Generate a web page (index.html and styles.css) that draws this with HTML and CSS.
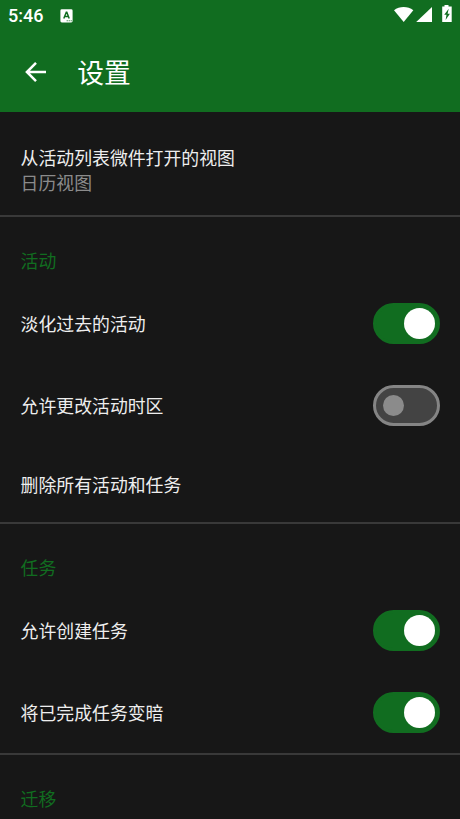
FILE: index.html
```html
<!DOCTYPE html>
<html lang="zh-CN">
<head>
<meta charset="utf-8">
<title>设置</title>
<link rel="stylesheet" href="styles.css">
</head>
<body>
<header class="header">
  <div class="status">
    <span class="clock">5:46</span>
    <svg class="notice" width="13" height="14" viewBox="0 0 13 14"><rect x="0.4" y="0.3" width="12.2" height="13.2" rx="1.4" fill="#fff"/><path d="M3.8 9.5 6.3 3.3h.5l2.4 6.2M4.6 7.5h3.8" fill="none" stroke="#116d20" stroke-width="1.5"/><path d="M6.7 11.2h1v1h-1zM8.7 11.2h1v1h-1zM10.7 11.2h1v1h-1z" fill="#116d20"/></svg>
    <svg class="signals" width="60" height="20" viewBox="0 0 60 20"><path d="M0 5.2C5.5.8 13.8.8 19.3 5.2L9.7 17Z" fill="#fff"/><path d="M22.2 17 38 1.9V17Z" fill="#fff"/><path d="M50.5 0h4v1.6h3.2V17H48.2V1.6h2.3Z" fill="#fff"/><path d="M54.7 3.8 50.2 9.7h2.3l-.9 5.2L55.9 8.7h-2.3Z" fill="#116d20"/></svg>
  </div>
  <div class="toolbar">
    <svg class="back" width="22" height="22" viewBox="0 0 22 22"><path d="M21 11H2M11 1.8 1.9 11 11 20.2" fill="none" stroke="#fff" stroke-width="2.5"/></svg>
    <h1 class="title">设置</h1>
  </div>
</header>
<main>
  <section class="group">
    <div class="row choice"><div class="label">从活动列表微件打开的视图</div><div class="value">日历视图</div></div>
  </section>
  <section class="group">
    <h2 class="heading">活动</h2>
    <div class="row"><span class="label">淡化过去的活动</span><span class="switch on"></span></div>
    <div class="row"><span class="label">允许更改活动时区</span><span class="switch"></span></div>
    <div class="row action"><span class="label">删除所有活动和任务</span></div>
  </section>
  <section class="group">
    <h2 class="heading">任务</h2>
    <div class="row"><span class="label">允许创建任务</span><span class="switch on"></span></div>
    <div class="row last"><span class="label">将已完成任务变暗</span><span class="switch on"></span></div>
  </section>
  <section class="group">
    <h2 class="heading">迁移</h2>
  </section>
</main>
</body>
</html>
```
FILE: styles.css
```css
* { box-sizing: border-box; }
html, body { height: 819px; overflow: hidden; }
body {
  margin: 0;
  background: #171717;
  color: #eee;
  font: 17.88px/25px Roboto, "Noto Sans CJK SC", sans-serif;
}
.header { height: 112.4px; background: #116d20; color: #fff; }
.status { display: flex; align-items: center; height: 32px; padding: 0 8px; }
.clock { width: 52px; font-size: 18px; font-weight: 500; line-height: 32px; }
.notice { display: block; }
.signals { display: block; margin: -1.5px -2px 0 auto; }
.toolbar { display: flex; align-items: center; height: 80px; padding-left: 25px; }
.back { display: block; }
.title { margin: 0 0 0 30.3px; padding-top: 3px; font-size: 26.8px; line-height: 40px; font-weight: 400; }
.group { border-bottom: 2px solid #393939; }
.group:last-child { border-bottom: 0; }
.row {
  display: flex;
  align-items: center;
  justify-content: space-between;
  height: 82px;
  padding: 0 20.3px 0 20.6px;
}
.label { padding-top: 2px; }
.choice { display: block; height: 102.6px; padding-top: 34px; }
.choice .label { padding-top: 1px; line-height: 24px; }
.value { color: #8b8b8b; }
.action { height: 75.5px; }
.last { height: 81.5px; }
.heading {
  height: 65.5px;
  margin: 0;
  padding: 32px 20.6px 0;
  color: #116d20;
  font-size: 17.88px;
  line-height: 25px;
  font-weight: 400;
}
.switch {
  display: flex;
  align-items: center;
  width: 66.7px;
  height: 41px;
  padding-left: 7px;
  border: 3px solid #858585;
  border-radius: 21px;
  background: #434343;
}
.switch::before { content: ""; width: 21px; height: 21px; border-radius: 50%; background: #8b8b8b; }
.switch.on { padding-left: 27.8px; border-color: #116d20; background: #116d20; }
.switch.on::before { width: 31px; height: 31px; background: #fff; }
```
